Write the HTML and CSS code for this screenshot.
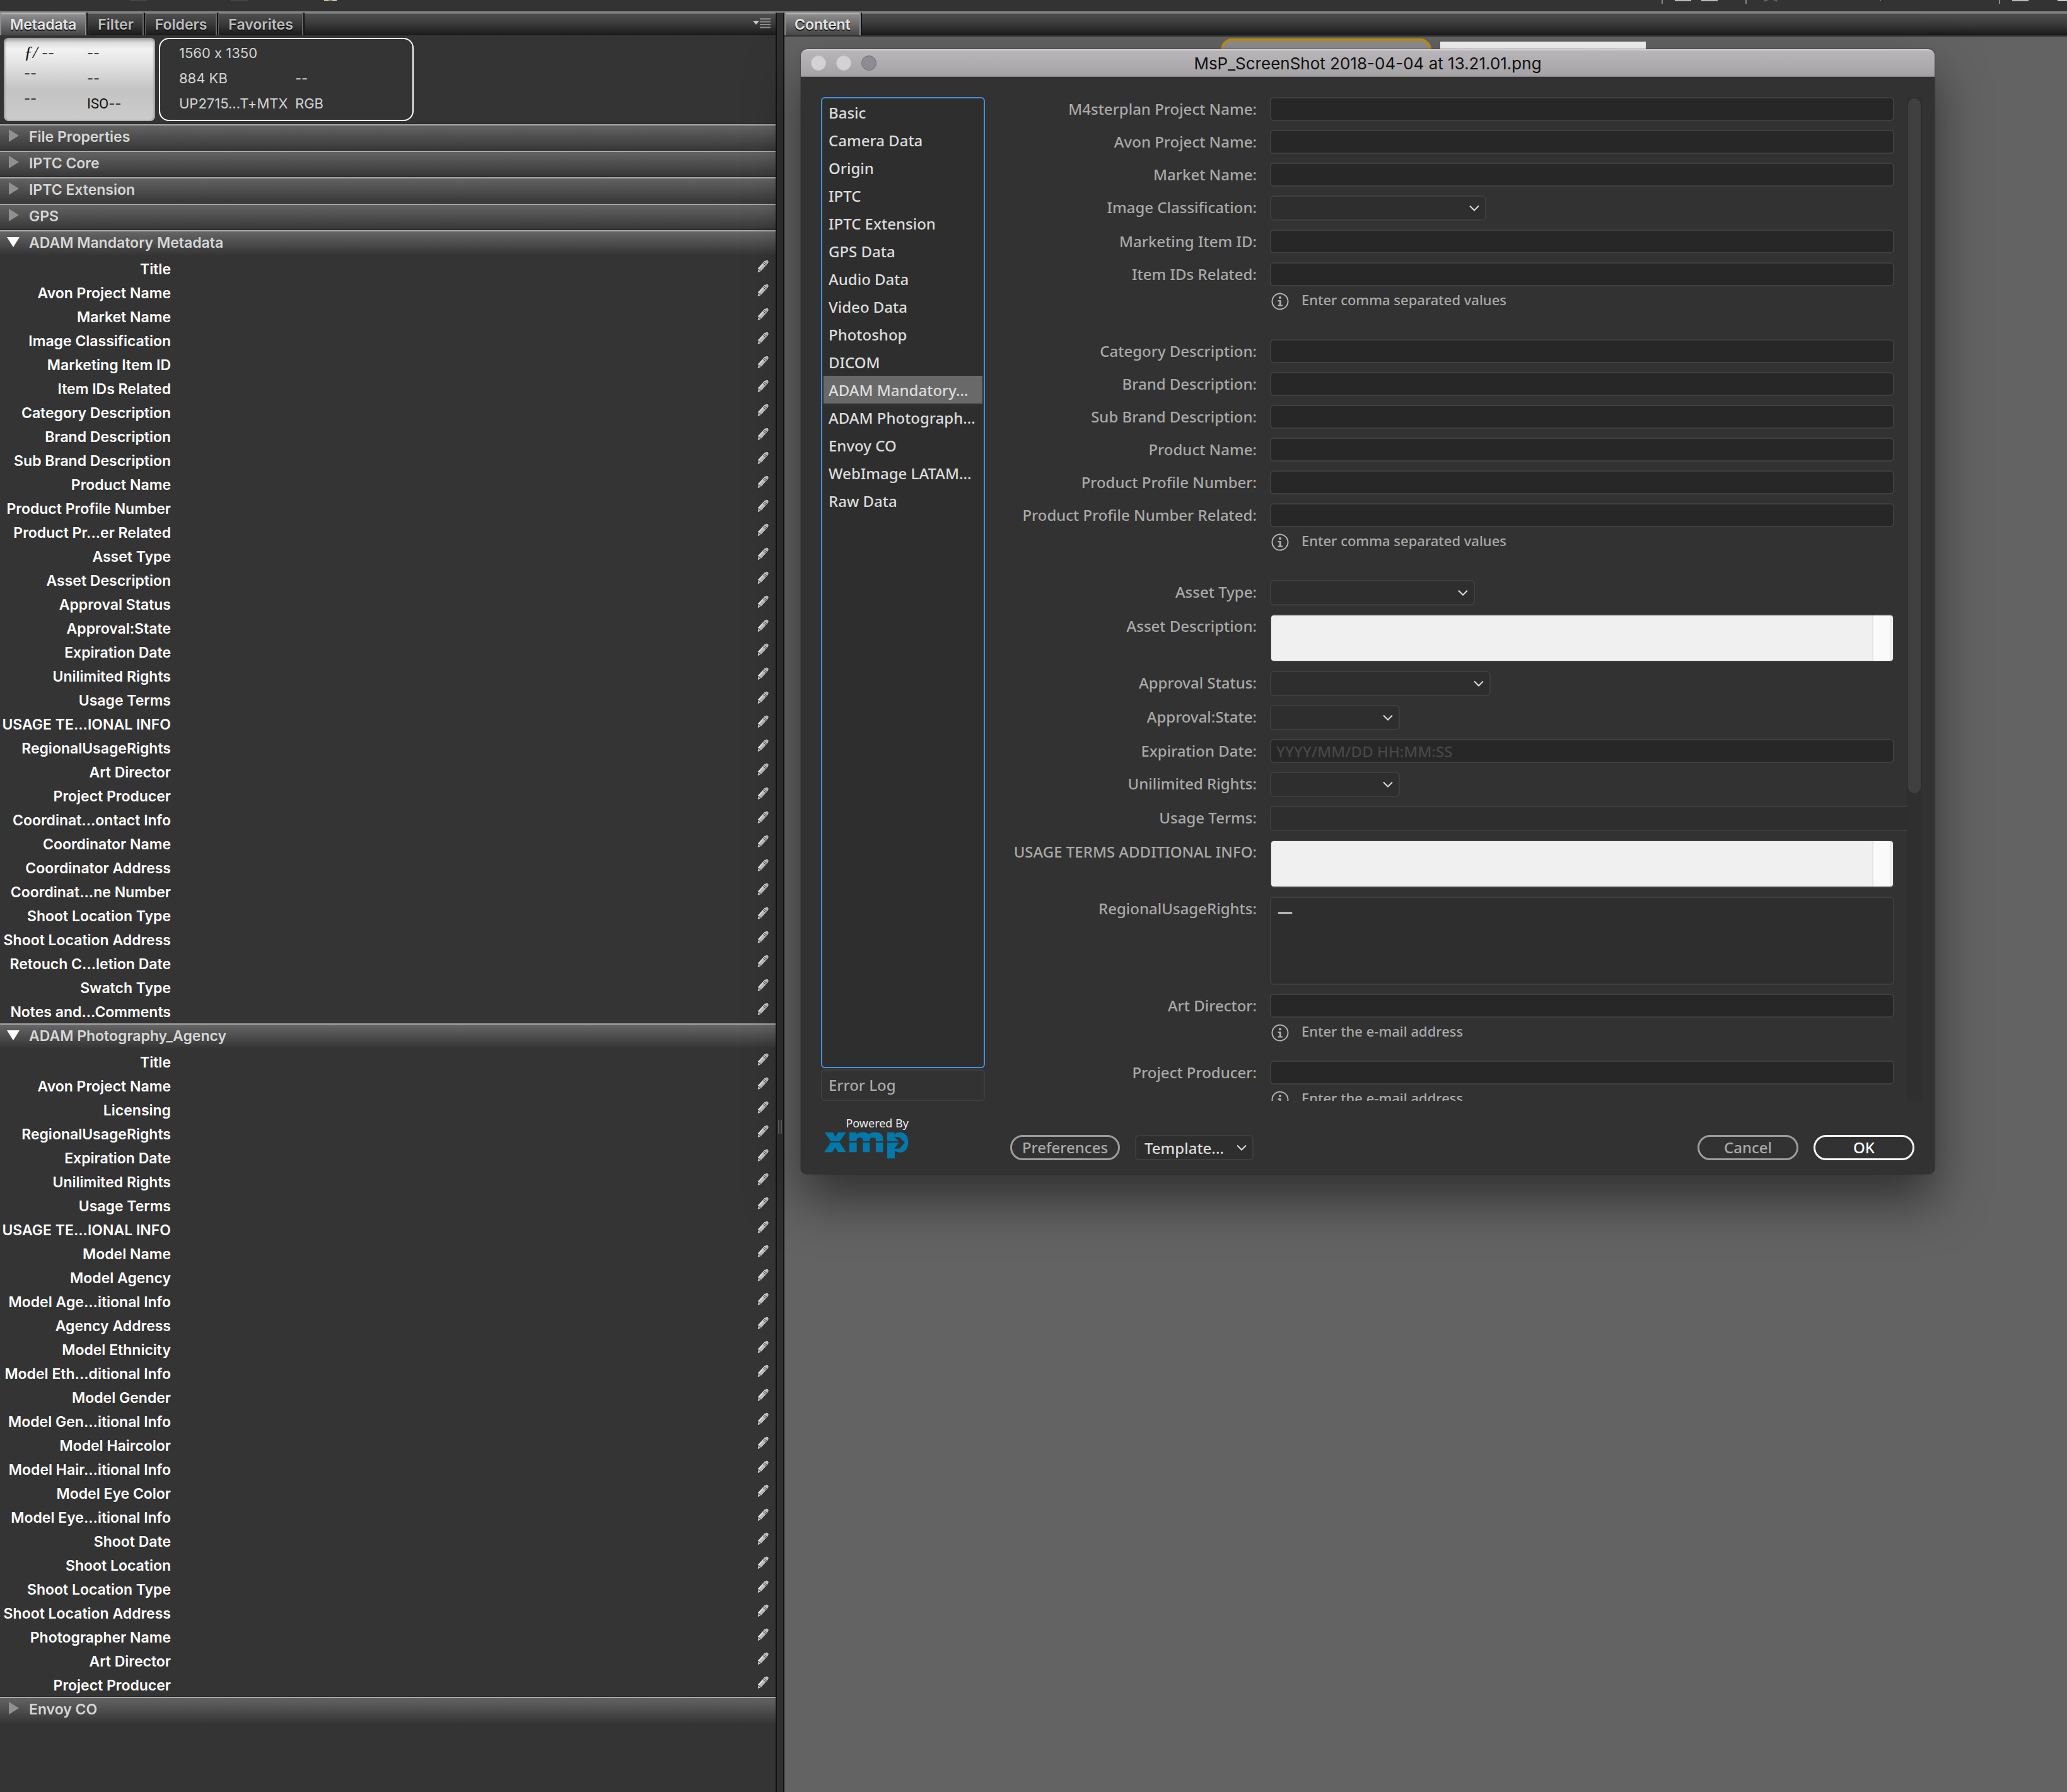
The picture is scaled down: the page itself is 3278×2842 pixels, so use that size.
FILE: index.html
```html
<!DOCTYPE html>
<html lang="en">
<head>
<meta charset="utf-8">
<title>Bridge - File Info</title>
<link rel="stylesheet" href="styles.css">
</head>
<body>
<svg class="defs" aria-hidden="true">
  <symbol id="pencil" viewBox="0 0 20 22">
    <path d="M1 20.500L2 15 13 2.500Q15.500 0 18 1.500 20.500 4 18.500 7L7 19.500 2.500 21.500Z" fill="#b9b9b9" stroke="#222" stroke-width="1"/>
    <path d="M2.500 15.500L13.500 3.500" stroke="#e6e6e6" stroke-width="2"/>
    <path d="M10 6.500l5 4M11.500 4.500l5 4M2 15.500l5 3.500" stroke="#444" stroke-width="1"/>
  </symbol>
  <symbol id="info" viewBox="0 0 28 28">
    <circle cx="14" cy="14" r="12.500" fill="none" stroke="#b4b4b4" stroke-width="2"/>
    <circle cx="14" cy="8" r="2" fill="#b4b4b4"/>
    <path d="M10.500 12H15.500V19.500H18V21.500H10.500V19.500H13V14H10.500Z" fill="#b4b4b4"/>
  </symbol>
</svg>

<header class="toolbar">
  <svg width="540" height="6" viewBox="0 0 540 6" aria-hidden="true">
    <path d="M207 0h26v1h-26zM366 0h28v1h-28z" fill="#4c4c4c"/><path d="M514 0h20v1h-20z" fill="#eee"/><path d="M521 0h6v1h-6z" fill="#c08a2c"/>
  </svg>
  <svg width="650" height="6" viewBox="0 0 650 6" aria-hidden="true">
    <path d="M7 0h2v6h-2zM140 0h2v6h-2zM542 0h2v6h-2z" fill="#8a8a8a"/>
    <path d="M28 0h26v2h-26zM70 0h26v2h-26zM563 0h26v2h-26z" fill="#b8b8b8"/>
    <path d="M170 0h7l-7 3zM184 0h6l1 3z" fill="#666"/><path d="M353 0h2v1h-2z" fill="#888"/><path d="M635 0h15v1h-15z" fill="#fff"/>
  </svg>
</header>

<div class="workspace">
  <aside class="panel">
    <div class="tabs" role="tablist">
      <button class="tab tab-active" role="tab" aria-selected="true">Metadata</button>
      <button class="tab" role="tab">Filter</button>
      <button class="tab" role="tab">Folders</button>
      <button class="tab" role="tab">Favorites</button>
      <button class="panel-menu" aria-label="Panel menu">
        <svg width="28" height="16" viewBox="0 0 28 16" aria-hidden="true"><path d="M0 4H10L5 10Z" fill="#c8c8c8"/><path d="M11 1H28M11 5.500H28M11 10H28M11 14.500H28" stroke="#8c8c8c" stroke-width="2"/></svg>
      </button>
    </div>

    <div class="placards">
      <div class="camera">
        <ul><li class="aperture"><i>ƒ/</i> --</li><li>--</li><li>--</li></ul>
        <ul><li>--</li><li>--</li><li class="iso"><span>ISO</span>--</li></ul>
      </div>
      <div class="file">
        <ul><li>1560 x 1350</li><li>884 KB</li><li>UP2715...T+MTX</li></ul>
        <ul><li></li><li>--</li><li>RGB</li></ul>
      </div>
    </div>

    <h2 class="section"><button>File Properties</button></h2>
    <h2 class="section"><button>IPTC Core</button></h2>
    <h2 class="section"><button>IPTC Extension</button></h2>
    <h2 class="section"><button>GPS</button></h2>
    <h2 class="section open"><button aria-expanded="true">ADAM Mandatory Metadata</button></h2>
    <ul class="rows">
      <li><span>Title</span><button aria-label="Edit"><svg><use href="#pencil"/></svg></button></li>
      <li><span>Avon Project Name</span><button aria-label="Edit"><svg><use href="#pencil"/></svg></button></li>
      <li><span>Market Name</span><button aria-label="Edit"><svg><use href="#pencil"/></svg></button></li>
      <li><span>Image Classification</span><button aria-label="Edit"><svg><use href="#pencil"/></svg></button></li>
      <li><span>Marketing Item ID</span><button aria-label="Edit"><svg><use href="#pencil"/></svg></button></li>
      <li><span>Item IDs Related</span><button aria-label="Edit"><svg><use href="#pencil"/></svg></button></li>
      <li><span>Category Description</span><button aria-label="Edit"><svg><use href="#pencil"/></svg></button></li>
      <li><span>Brand Description</span><button aria-label="Edit"><svg><use href="#pencil"/></svg></button></li>
      <li><span>Sub Brand Description</span><button aria-label="Edit"><svg><use href="#pencil"/></svg></button></li>
      <li><span>Product Name</span><button aria-label="Edit"><svg><use href="#pencil"/></svg></button></li>
      <li><span>Product Profile Number</span><button aria-label="Edit"><svg><use href="#pencil"/></svg></button></li>
      <li><span>Product Pr...er Related</span><button aria-label="Edit"><svg><use href="#pencil"/></svg></button></li>
      <li><span>Asset Type</span><button aria-label="Edit"><svg><use href="#pencil"/></svg></button></li>
      <li><span>Asset Description</span><button aria-label="Edit"><svg><use href="#pencil"/></svg></button></li>
      <li><span>Approval Status</span><button aria-label="Edit"><svg><use href="#pencil"/></svg></button></li>
      <li><span>Approval:State</span><button aria-label="Edit"><svg><use href="#pencil"/></svg></button></li>
      <li><span>Expiration Date</span><button aria-label="Edit"><svg><use href="#pencil"/></svg></button></li>
      <li><span>Unilimited Rights</span><button aria-label="Edit"><svg><use href="#pencil"/></svg></button></li>
      <li><span>Usage Terms</span><button aria-label="Edit"><svg><use href="#pencil"/></svg></button></li>
      <li><span>USAGE TE...IONAL INFO</span><button aria-label="Edit"><svg><use href="#pencil"/></svg></button></li>
      <li><span>RegionalUsageRights</span><button aria-label="Edit"><svg><use href="#pencil"/></svg></button></li>
      <li><span>Art Director</span><button aria-label="Edit"><svg><use href="#pencil"/></svg></button></li>
      <li><span>Project Producer</span><button aria-label="Edit"><svg><use href="#pencil"/></svg></button></li>
      <li><span>Coordinat...ontact Info</span><button aria-label="Edit"><svg><use href="#pencil"/></svg></button></li>
      <li><span>Coordinator Name</span><button aria-label="Edit"><svg><use href="#pencil"/></svg></button></li>
      <li><span>Coordinator Address</span><button aria-label="Edit"><svg><use href="#pencil"/></svg></button></li>
      <li><span>Coordinat...ne Number</span><button aria-label="Edit"><svg><use href="#pencil"/></svg></button></li>
      <li><span>Shoot Location Type</span><button aria-label="Edit"><svg><use href="#pencil"/></svg></button></li>
      <li><span>Shoot Location Address</span><button aria-label="Edit"><svg><use href="#pencil"/></svg></button></li>
      <li><span>Retouch C...letion Date</span><button aria-label="Edit"><svg><use href="#pencil"/></svg></button></li>
      <li><span>Swatch Type</span><button aria-label="Edit"><svg><use href="#pencil"/></svg></button></li>
      <li><span>Notes and...Comments</span><button aria-label="Edit"><svg><use href="#pencil"/></svg></button></li>
    </ul>
    <h2 class="section open"><button aria-expanded="true">ADAM Photography_Agency</button></h2>
    <ul class="rows">
      <li><span>Title</span><button aria-label="Edit"><svg><use href="#pencil"/></svg></button></li>
      <li><span>Avon Project Name</span><button aria-label="Edit"><svg><use href="#pencil"/></svg></button></li>
      <li><span>Licensing</span><button aria-label="Edit"><svg><use href="#pencil"/></svg></button></li>
      <li><span>RegionalUsageRights</span><button aria-label="Edit"><svg><use href="#pencil"/></svg></button></li>
      <li><span>Expiration Date</span><button aria-label="Edit"><svg><use href="#pencil"/></svg></button></li>
      <li><span>Unilimited Rights</span><button aria-label="Edit"><svg><use href="#pencil"/></svg></button></li>
      <li><span>Usage Terms</span><button aria-label="Edit"><svg><use href="#pencil"/></svg></button></li>
      <li><span>USAGE TE...IONAL INFO</span><button aria-label="Edit"><svg><use href="#pencil"/></svg></button></li>
      <li><span>Model Name</span><button aria-label="Edit"><svg><use href="#pencil"/></svg></button></li>
      <li><span>Model Agency</span><button aria-label="Edit"><svg><use href="#pencil"/></svg></button></li>
      <li><span>Model Age...itional Info</span><button aria-label="Edit"><svg><use href="#pencil"/></svg></button></li>
      <li><span>Agency Address</span><button aria-label="Edit"><svg><use href="#pencil"/></svg></button></li>
      <li><span>Model Ethnicity</span><button aria-label="Edit"><svg><use href="#pencil"/></svg></button></li>
      <li><span>Model Eth...ditional Info</span><button aria-label="Edit"><svg><use href="#pencil"/></svg></button></li>
      <li><span>Model Gender</span><button aria-label="Edit"><svg><use href="#pencil"/></svg></button></li>
      <li><span>Model Gen...itional Info</span><button aria-label="Edit"><svg><use href="#pencil"/></svg></button></li>
      <li><span>Model Haircolor</span><button aria-label="Edit"><svg><use href="#pencil"/></svg></button></li>
      <li><span>Model Hair...itional Info</span><button aria-label="Edit"><svg><use href="#pencil"/></svg></button></li>
      <li><span>Model Eye Color</span><button aria-label="Edit"><svg><use href="#pencil"/></svg></button></li>
      <li><span>Model Eye...itional Info</span><button aria-label="Edit"><svg><use href="#pencil"/></svg></button></li>
      <li><span>Shoot Date</span><button aria-label="Edit"><svg><use href="#pencil"/></svg></button></li>
      <li><span>Shoot Location</span><button aria-label="Edit"><svg><use href="#pencil"/></svg></button></li>
      <li><span>Shoot Location Type</span><button aria-label="Edit"><svg><use href="#pencil"/></svg></button></li>
      <li><span>Shoot Location Address</span><button aria-label="Edit"><svg><use href="#pencil"/></svg></button></li>
      <li><span>Photographer Name</span><button aria-label="Edit"><svg><use href="#pencil"/></svg></button></li>
      <li><span>Art Director</span><button aria-label="Edit"><svg><use href="#pencil"/></svg></button></li>
      <li><span>Project Producer</span><button aria-label="Edit"><svg><use href="#pencil"/></svg></button></li>
    </ul>
    <h2 class="section"><button>Envoy CO</button></h2>
  </aside>

  <div class="divider"><span class="grip"></span></div>

  <main class="content">
    <div class="tabs" role="tablist">
      <button class="tab tab-active" role="tab" aria-selected="true">Content</button>
    </div>
    <div class="canvas">
      <div class="thumbs"><div class="thumb thumb-selected"></div><div class="thumb"></div></div>

      <form class="dialog" role="dialog" aria-labelledby="dialog-title">
        <div class="titlebar">
          <span class="lights"><i></i><i></i><i></i></span>
          <h1 id="dialog-title">MsP_ScreenShot 2018-04-04 at 13.21.01.png</h1>
        </div>

        <div class="dialog-body">
          <nav class="side">
            <ul class="categories">
              <li><button type="button">Basic</button></li>
              <li><button type="button">Camera Data</button></li>
              <li><button type="button">Origin</button></li>
              <li><button type="button">IPTC</button></li>
              <li><button type="button">IPTC Extension</button></li>
              <li><button type="button">GPS Data</button></li>
              <li><button type="button">Audio Data</button></li>
              <li><button type="button">Video Data</button></li>
              <li><button type="button">Photoshop</button></li>
              <li><button type="button">DICOM</button></li>
              <li><button type="button" class="current" aria-current="true">ADAM Mandatory...</button></li>
              <li><button type="button">ADAM Photograph...</button></li>
              <li><button type="button">Envoy CO</button></li>
              <li><button type="button">WebImage LATAM...</button></li>
              <li><button type="button">Raw Data</button></li>
            </ul>
            <button type="button" class="error-log">Error Log</button>
          </nav>

          <div class="fields">
            <div class="field"><label for="f1">M4sterplan Project Name:</label><input id="f1" type="text"></div>
            <div class="field"><label for="f2">Avon Project Name:</label><input id="f2" type="text"></div>
            <div class="field"><label for="f3">Market Name:</label><input id="f3" type="text"></div>
            <div class="field"><label for="f4">Image Classification:</label><select id="f4" class="classification"><option></option></select></div>
            <div class="field"><label for="f5">Marketing Item ID:</label><input id="f5" type="text"></div>
            <div class="field"><label for="f6">Item IDs Related:</label><input id="f6" type="text">
              <p class="note note-tall"><svg><use href="#info"/></svg>Enter comma separated values</p></div>
            <div class="field"><label for="f7">Category Description:</label><input id="f7" type="text"></div>
            <div class="field"><label for="f8">Brand Description:</label><input id="f8" type="text"></div>
            <div class="field"><label for="f9">Sub Brand Description:</label><input id="f9" type="text"></div>
            <div class="field"><label for="f10">Product Name:</label><input id="f10" type="text"></div>
            <div class="field"><label for="f11">Product Profile Number:</label><input id="f11" type="text"></div>
            <div class="field"><label for="f12">Product Profile Number Related:</label><input id="f12" type="text">
              <p class="note note-tall"><svg><use href="#info"/></svg>Enter comma separated values</p></div>
            <div class="field"><label for="f13">Asset Type:</label><select id="f13" class="asset-type"><option></option></select></div>
            <div class="field"><label for="f14">Asset Description:</label><textarea id="f14"></textarea></div>
            <div class="field"><label for="f15">Approval Status:</label><select id="f15" class="status"><option></option></select></div>
            <div class="field"><label for="f16">Approval:State:</label><select id="f16" class="short"><option></option></select></div>
            <div class="field"><label for="f17">Expiration Date:</label><input id="f17" type="text" placeholder="YYYY/MM/DD HH:MM:SS"></div>
            <div class="field"><label for="f18">Unilimited Rights:</label><select id="f18" class="short"><option></option></select></div>
            <div class="field"><label for="f19">Usage Terms:</label><select id="f19" class="terms"><option></option></select></div>
            <div class="field"><label for="f20">USAGE TERMS ADDITIONAL INFO:</label><textarea id="f20"></textarea></div>
            <div class="field"><label for="f21">RegionalUsageRights:</label><textarea id="f21" class="regions">—</textarea></div>
            <div class="field"><label for="f22">Art Director:</label><input id="f22" type="text">
              <p class="note"><svg><use href="#info"/></svg>Enter the e-mail address</p></div>
            <div class="field"><label for="f23">Project Producer:</label><input id="f23" type="text">
              <p class="note"><svg><use href="#info"/></svg>Enter the e-mail address</p></div>
          </div>
          <div class="track"><div class="handle"></div></div>
        </div>

        <div class="dialog-foot">
          <div class="brand">
            <span>Powered By</span>
            <svg width="134" height="43" viewBox="18 107 402 129" role="img" aria-label="xmp">
              <g fill="#0279aa">
                <path d="M20 110H60L71 132 84 110H122L92 152H50ZM50 157H92L122 204H84L71 181 56 204H18Z"/>
                <path d="M138 152V110H172V118Q185 108 205 109 222 109 230 118 243 108 264 109 298 111 298 142V152H264V145Q264 134 250 134 236 134 235 145V152H202V145Q202 134 188 134 174 134 173 145V152ZM138 158H173V204H138ZM202 158H235V204H202ZM264 158H298V204H264Z"/>
                <path d="M318 110H352V118Q364 108 382 109 417 113 418 156 417 199 386 205 366 207 354 198V234H318Z"/>
              </g>
              <path d="M318 152H374L352 132H374L402 157 376 187H352L374 158H318Z" fill="#323232"/>
            </svg>
          </div>
          <button type="button" class="pill preferences">Preferences</button>
          <select class="template" aria-label="Template"><option>Template...</option></select>
          <button type="button" class="pill cancel">Cancel</button>
          <button type="submit" class="pill ok">OK</button>
        </div>
      </form>
    </div>
  </main>
</div>
</body>
</html>
```
FILE: styles.css
```css
* { box-sizing: border-box; }
body { margin: 0; min-height: 100vh; display: flex; flex-direction: column; background: #333; color: #d4d4d4; font-family: Inter, "Liberation Sans", sans-serif; }
ul, h1, h2, p { margin: 0; padding: 0; list-style: none; }
button { border: 0; padding: 0; background: none; color: inherit; font: inherit; text-align: left; }
.defs { position: absolute; width: 0; height: 0; }

.toolbar { display: flex; justify-content: space-between; height: 20px; border-bottom: 2px solid #898989; background: #333; }
.workspace { flex: 1; display: grid; grid-template-columns: minmax(0, 615fr) 14px minmax(0, 1017fr); }

/* tab strips */
.tabs { display: flex; height: 36px; background: linear-gradient(#707070 2px, #4e4e4e 2px, #3a3a3a 50%, #1a1a1a); }
.tab { padding: 0 16px; border-right: 2px solid #111; box-shadow: inset -2px 0 #666, inset 1px 0 #5a5a5a; font-size: 23px; font-weight: 600; line-height: 38px; color: #bdbdbd; text-shadow: 0 2px 1px #111; }
.tab-active { background: linear-gradient(#b0b0b0 2px, #8d8d8d 3px, #474747); box-shadow: inset -2px 0 #8f8f8f, inset 2px 0 #8f8f8f; color: #e6e6e6; }
.panel-menu { align-self: flex-start; margin-left: auto; padding: 9px 8px 0 0; }
.panel-menu svg { display: block; }

/* metadata panel */
.panel { background: #343434; }
.placards { display: flex; gap: 6px; padding: 4px 6px 5px; font-size: 22px; line-height: 40px; font-variant-ligatures: no-contextual; }
.placards ul { white-space: nowrap; }
.placards li { height: 40px; }
.camera { display: flex; width: 240px; height: 132px; padding-left: 32px; border-radius: 8px; background: linear-gradient(#9a9a9a, #dedede 8px, #f2f2f2 18px, #e4e4e4 30%, #c4c4c4 62%, #cbcbcb); box-shadow: inset 2px 0 3px #9a9a9a, inset -2px 0 3px #9a9a9a; color: #333; }
.camera ul { width: 100px; }
.camera ul + ul { padding-top: 4px; }
.camera .aperture { height: 36px; line-height: 48px; }
.aperture i { font-family: "Liberation Serif", serif; font-size: 28px; line-height: 28px; color: #111; }
.iso span { font-family: Roboto, sans-serif; color: #111; }
.file { display: flex; width: 404px; height: 132px; padding: 2px 0 0 30px; border: 2px solid #fff; border-radius: 16px; }
.file ul { width: 184px; }

.section { border-top: 2px solid #a9a9a9; box-shadow: 0 -1px #222; background: linear-gradient(#636363, #363636); font-size: 23px; font-weight: 600; }
.section button { display: flex; width: 100%; height: 40px; line-height: 36px; color: #d6d6d6; }
.section button::before { content: ""; width: 16px; height: 20px; margin: 6px 16px 0 14px; background: #909090; clip-path: polygon(0 0, 100% 50%, 0 100%); }
.section.open { box-shadow: 0 -1px #222; background: linear-gradient(#666, #343434 38px); }
.section.open button::before { width: 20px; height: 16px; margin: 9px 15px 0 11px; background: #fff; clip-path: polygon(0 0, 100% 0, 50% 100%); }

.rows { font-size: 23px; font-weight: 600; line-height: 40px; color: #fff; }
.rows li { display: flex; align-items: flex-start; justify-content: space-between; height: 38px; padding-right: 10px; }
.rows span { width: 271px; text-align: right; white-space: nowrap; }
.rows svg { display: block; width: 20px; height: 22px; margin-top: 4px; }

.divider { position: relative; border: solid #121212; border-width: 0 2px; background: #303030; }
.grip { position: absolute; top: 1756px; left: 2px; width: 6px; height: 22px; border: solid #606060; border-width: 0 2px; }

/* content area */
.content { display: flex; flex-direction: column; }
.canvas { position: relative; flex: 1; border-top: 2px solid #343434; background: #636363; }
.thumbs { display: flex; gap: 14px; padding: 3px 0 0 692px; }
.thumb { width: 326px; height: 60px; margin-top: 5px; background: #f6f6f6; }
.thumb-selected { width: 334px; margin-top: 0; border: 4px solid #bd9013; border-radius: 18px; background: #8f8f8f; }

/* file info dialog */
.dialog { position: absolute; top: 20px; left: 26px; right: 210px; border-radius: 10px; background: #323232; box-shadow: 0 40px 80px rgba(0, 0, 0, .5), 0 0 2px #222; font-family: "Noto Sans", "Open Sans", sans-serif; font-size: 24px; font-weight: 500; color: #a9a9a9; }
.titlebar { position: relative; height: 44px; border-top: 2px solid #d2d0d2; border-bottom: 2px solid #8a888a; border-radius: 10px 10px 0 0; background: linear-gradient(#b8b6b8, #a5a3a5); }
.titlebar h1 { font: 400 26px/42px Inter, "Liberation Sans", sans-serif; text-align: center; color: #111; }
.lights { position: absolute; top: 8px; left: 16px; display: flex; gap: 16px; }
.lights i { width: 24px; height: 24px; border: 1px solid #c6c6c6; border-radius: 50%; background: #d3d3d3; }
.lights i:last-child { border-color: #737176; background: #8e8c92; }

.dialog-body { display: grid; grid-template-columns: 260px minmax(0, 1fr) 24px; height: 1624px; padding: 32px 20px 0 32px; }
.side { display: flex; flex-direction: column; gap: 2px; min-height: 0; }
.categories { flex: 1; border: 2px solid #4392e0; border-radius: 6px; background: #2e2e2e; }
.categories button { display: block; width: 252px; height: 44px; margin-left: 2px; padding: 2px 0 0 8px; line-height: 42px; white-space: nowrap; color: #dcdcdc; }
.categories .current { background: #696969; }
.error-log { height: 50px; padding: 0 0 2px 10px; border: 2px solid #3e3e3e; border-radius: 6px; }

.fields { display: flex; flex-direction: column; gap: 14px; overflow: hidden; padding: 0 20px 0 38px; }
.field { flex: none; display: grid; grid-template-columns: 393px minmax(0, 1fr); column-gap: 21px; }
.field label { height: 38px; line-height: 38px; text-align: right; white-space: nowrap; }
.field input { height: 38px; padding: 0 8px; border: 2px solid #3f3f3f; border-radius: 6px; background: #272727; color: #ddd; font: inherit; }
.field input::placeholder { color: #484848; opacity: 1; }
select { appearance: none; height: 40px; border: 2px solid #3e3e3e; border-radius: 6px; background: #2e2e2e url("data:image/svg+xml,%3Csvg xmlns='http://www.w3.org/2000/svg' width='16' height='10'%3E%3Cpath d='M1 1.500L8 8.500 15 1.500' fill='none' stroke='%23ddd' stroke-width='2'/%3E%3C/svg%3E") no-repeat right 9px center; color: #dcdcdc; font: inherit; }
.classification { width: 343px; }
.asset-type { width: 325px; }
.status { width: 350px; }
.short { width: 206px; }
.terms { margin-right: -20px; border-right: 0; border-radius: 6px 0 0 6px; background-image: none; }
textarea { display: block; height: 76px; resize: none; overflow: hidden; border: 2px solid #3e3e3e; border-radius: 6px; background: linear-gradient(90deg, #e6e6e6 2px, #fafafa 2px 28px, #ececec 28px) right / 33px 100% no-repeat #f0f0f0; font: inherit; }
.regions { height: 140px; padding: 2px 10px; background: #2e2e2e; color: #dcdcdc; line-height: 38px; font-weight: 600; }
.note { grid-column: 2; display: flex; gap: 20px; height: 44px; margin-top: 10px; padding-left: 2px; font-size: 22px; line-height: 22px; }
.note-tall { height: 60px; }
.note svg { width: 28px; height: 28px; }
.track { padding: 2px; background: #2f2f2f; }
.handle { height: 1102px; border-radius: 10px; background: #404040; }

.dialog-foot { display: flex; align-items: flex-end; padding: 25px 32px 22px; }
.brand { width: 139px; margin-right: 161px; padding-bottom: 2px; }
.brand span { display: block; height: 24px; font-size: 18px; font-weight: 400; line-height: 20px; text-align: right; color: #eee; }
.brand svg { display: block; margin-left: 5px; }
.pill { height: 40px; border: 3px solid #9c9c9c; border-radius: 20px; text-align: center; line-height: 34px; }
.preferences { width: 174px; }
.template { width: 188px; margin: 0 auto 0 24px; padding: 0 13px; }
.cancel, .ok { width: 160px; }
.ok { margin-left: 24px; border-color: #f4f4f4; color: #fff; }
```
